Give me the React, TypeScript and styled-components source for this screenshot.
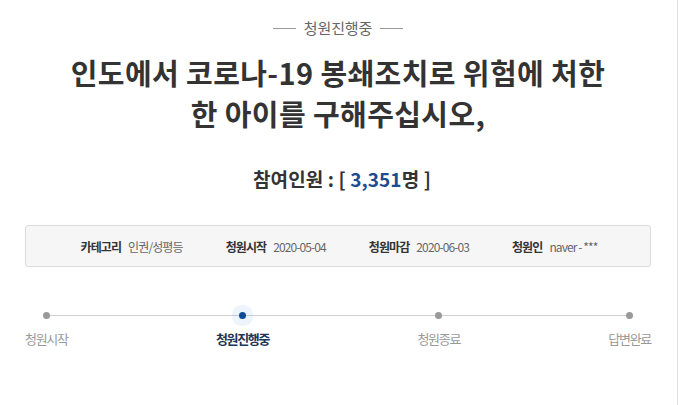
import React from 'react';
import styled, { createGlobalStyle } from 'styled-components';

const GlobalStyle = createGlobalStyle`
  html, body {
    margin: 0;
    padding: 0;
    background: #fff;
  }
  body {
    font-family: 'Noto Sans CJK KR', 'Noto Sans', sans-serif;
    color: #333;
  }
`;

const Page = styled.div`
  box-sizing: border-box;
  width: 678px;
  height: 405px;
  border-right: 1px solid #e2e2e2;
  padding: 17px 26px 0 25px;
  overflow: hidden;
`;

const Status = styled.div`
  display: flex;
  justify-content: center;
  align-items: center;
  gap: 8px;
  font-size: 15px;
  line-height: 22px;
  color: #666;
  letter-spacing: -0.1px;

  &::before,
  &::after {
    content: '';
    width: 23px;
    height: 1px;
    background: #999;
  }
`;

const Title = styled.h1`
  margin: 13px 0 0;
  text-align: center;
  font-size: 29px;
  line-height: 41px;
  font-weight: 700;
  color: #333;
  letter-spacing: 0.4px;
`;

const Count = styled.div`
  margin-top: 32px;
  text-align: center;
  font-size: 19px;
  line-height: 26px;
  font-weight: 700;
  color: #333;
  letter-spacing: 0.1px;
  padding-left: 8px;
`;

const CountNum = styled.span`
  color: #1d4b8f;
`;

const InfoBox = styled.div`
  margin-top: 33px;
  height: 42px;
  box-sizing: border-box;
  border: 1px solid #dcdcdc;
  border-radius: 3px;
  background: #f6f6f6;
  display: flex;
  justify-content: center;
  align-items: center;
  gap: 43px;
  padding-left: 2px;
`;

const InfoItem = styled.div`
  display: flex;
  align-items: center;
  gap: 7px;
  font-size: 12px;
  letter-spacing: -0.9px;
`;

const InfoLabel = styled.span`
  font-weight: 700;
  color: #333;
`;

const InfoValue = styled.span`
  color: #666;
`;

const Steps = styled.div`
  position: relative;
  margin-top: 45px;
  display: flex;
  justify-content: space-between;

  &::before {
    content: '';
    position: absolute;
    left: 20px;
    right: 21px;
    top: 3px;
    height: 1px;
    background: #cfcfcf;
  }
`;

const Step = styled.div`
  position: relative;
  display: flex;
  flex-direction: column;
  align-items: center;
  gap: 11px;
`;

const Dot = styled.span<{ $active?: boolean }>`
  width: 7px;
  height: 7px;
  border-radius: 50%;
  background: ${p => (p.$active ? '#114a94' : '#999')};
  box-shadow: ${p => (p.$active ? '0 0 0 7px rgba(140, 185, 235, 0.16)' : 'none')};
`;

const StepLabel = styled.span<{ $active?: boolean }>`
  font-size: 13px;
  line-height: 18px;
  letter-spacing: -1.3px;
  color: ${p => (p.$active ? '#1d3557' : '#999')};
  font-weight: ${p => (p.$active ? 700 : 400)};
`;

const info = [
  { label: '카테고리', value: '인권/성평등' },
  { label: '청원시작', value: '2020-05-04' },
  { label: '청원마감', value: '2020-06-03' },
  { label: '청원인', value: 'naver - ***' },
];

const steps = [
  { label: '청원시작' },
  { label: '청원진행중', active: true },
  { label: '청원종료' },
  { label: '답변완료' },
];

export default function App() {
  return (
    <>
      <GlobalStyle />
      <Page>
        <Status>청원진행중</Status>
        <Title>
          인도에서 코로나-19 봉쇄조치로 위험에 처한
          <br />
          한 아이를 구해주십시오,
        </Title>
        <Count>
          참여인원 : [ <CountNum>3,351</CountNum>명 ]
        </Count>
        <InfoBox>
          {info.map(item => (
            <InfoItem key={item.label}>
              <InfoLabel>{item.label}</InfoLabel>
              <InfoValue>{item.value}</InfoValue>
            </InfoItem>
          ))}
        </InfoBox>
        <Steps>
          {steps.map(s => (
            <Step key={s.label}>
              <Dot $active={s.active} />
              <StepLabel $active={s.active}>{s.label}</StepLabel>
            </Step>
          ))}
        </Steps>
      </Page>
    </>
  );
}
